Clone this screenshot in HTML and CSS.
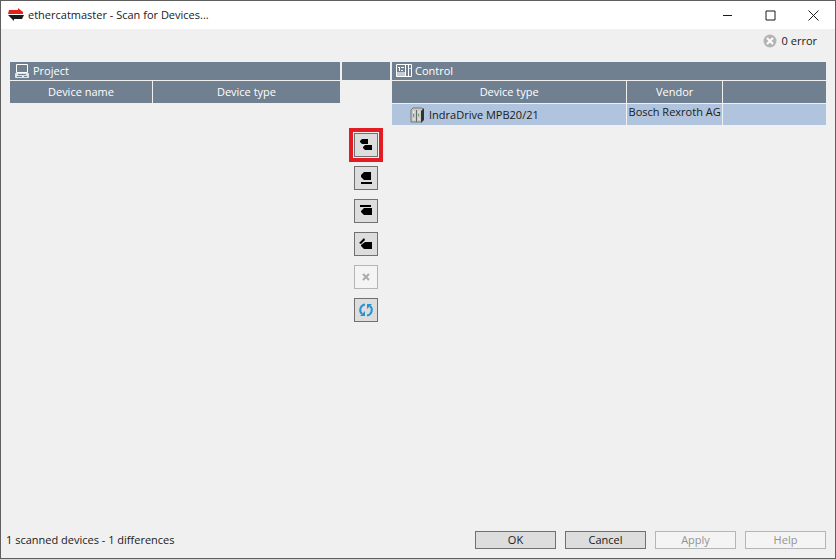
FILE: index.html
```html
<!DOCTYPE html>
<html lang="en">
<head>
    <meta charset="UTF-8">
    <meta name="viewport" content="width=device-width, initial-scale=1.0">
    <title>ethercatmaster - Scan for Devices...</title>
    <link rel="stylesheet" href="styles.css">
</head>
<body>

    <div class="window">
        <header class="titlebar">
            <svg class="app-icon" width="16" height="14" viewBox="0 0 16 14">
                <path d="M1 2h9V0l5 4v2H0z" fill="#e2231a"/>
                <path d="M16 7H0l6 6v-2h8z" fill="#1a1a1a"/>
            </svg>
            <h1>ethercatmaster - Scan for Devices...</h1>
            <div class="window-buttons">
                <button aria-label="Minimize"><svg width="11" height="11" viewBox="0 0 11 11"><path d="M1 5.5h9"/></svg></button>
                <button aria-label="Maximize"><svg width="11" height="11" viewBox="0 0 11 11"><path d="M1 1h9v9H1z"/></svg></button>
                <button aria-label="Close"><svg width="11" height="11" viewBox="0 0 11 11"><path d="M.5.5l10 10M10.500.5l-10 10"/></svg></button>
            </div>
        </header>

        <div class="errors">
            <svg width="14" height="14" viewBox="0 0 14 14">
                <circle cx="7" cy="7" r="6.500" fill="#b4b4b4"/>
                <path d="M4 4l6 6M10 4l-6 6" stroke="#fff" stroke-width="2"/>
            </svg>
            <span>0 error</span>
        </div>

        <main class="compare">
            <section class="panel">
                <h2>
                    <svg width="16" height="16" viewBox="0 0 16 16" fill="none" stroke="#fff">
                        <path d="M2.500 1.500h11v8h-11z"/>
                        <path d="M1.500 10.500h13v4h-13z" fill="#dfe4e8" stroke="#dfe4e8"/>
                        <path d="M4 11.500h8M3 13.500h5M10 13.500h3" stroke="#708090"/>
                    </svg>
                    Project
                </h2>
                <table>
                    <colgroup><col class="col-name"><col></colgroup>
                    <thead>
                        <tr><th>Device name</th><th>Device type</th></tr>
                    </thead>
                </table>
            </section>

            <div class="actions">
                <div class="actions-head"></div>
                <button class="marked" aria-label="Copy device">
                    <svg width="16" height="16" viewBox="0 0 16 16"><path d="M4 2h6v5H4L2 5V4zM7 8h7v5H7l-2-2v-1z"/></svg>
                </button>
                <button aria-label="Insert above">
                    <svg width="16" height="16" viewBox="0 0 16 16"><path d="M6 2h7v8H6L3 7V5zM3 12h11v2H3z"/></svg>
                </button>
                <button aria-label="Insert below">
                    <svg width="16" height="16" viewBox="0 0 16 16"><path d="M2 2h11v2H2zM6 5h8v7H6L3 9V8z"/></svg>
                </button>
                <button aria-label="Insert as child">
                    <svg width="16" height="16" viewBox="0 0 16 16"><path d="M1 7l5-5 1 2-4 4zM7 6h7v7H6l-3-3V9z"/></svg>
                </button>
                <button disabled aria-label="Delete">
                    <svg width="16" height="16" viewBox="0 0 16 16"><path d="M5 5l6 6M11 5l-6 6" stroke="#aaa" stroke-width="2"/></svg>
                </button>
                <button aria-label="Refresh">
                    <svg width="16" height="16" viewBox="0 0 16 16">
                        <path d="M7 2.500a5.500 5.500 0 0 0-3 9.500M9 13.500a5.500 5.500 0 0 0 3-9.500" fill="none" stroke="#2a93cf" stroke-width="2"/>
                        <path d="M2 14h5V9zM14 2H9v5z" fill="#2a93cf"/>
                    </svg>
                </button>
            </div>

            <section class="panel">
                <h2>
                    <svg width="16" height="14" viewBox="0 0 16 14" fill="none" stroke="#fff">
                        <path d="M.5.5h15v12H.5zM9.500 1v12M12.500 1v12M2 3.500h2M5 3.500h3M3.500 4v3M5 6.500h2"/>
                        <path d="M1 10h8" stroke="#c5ccd3" stroke-width="4"/>
                        <path d="M13 4.500h2" stroke="#c5ccd3"/>
                    </svg>
                    Control
                </h2>
                <table>
                    <colgroup><col><col class="col-vendor"><col class="col-extra"></colgroup>
                    <thead>
                        <tr><th>Device type</th><th>Vendor</th><th></th></tr>
                    </thead>
                    <tbody>
                        <tr>
                            <td>
                                <div class="device">
                                    <svg width="14" height="16" viewBox="0 0 14 16">
                                        <path d="M1 3l2-2h9l1 1v11l-2 2H1z" fill="#c9ccc6" stroke="#777"/>
                                        <path d="M11 4l3-3v12l-3 3z" fill="#333"/>
                                        <path d="M6.500 3v12" stroke="#6b6b6b"/>
                                        <path d="M3 5h2M8 5h2M3 12h2M8 12h2" stroke="#f3f3f3"/>
                                        <path d="M3 7h1v3H3zM8 7h1v2H8z" fill="#4fae4f"/>
                                    </svg>
                                    IndraDrive MPB20/21
                                </div>
                            </td>
                            <td class="vendor">Bosch Rexroth AG</td>
                            <td></td>
                        </tr>
                    </tbody>
                </table>
            </section>
        </main>

        <footer class="footer">
            <span class="status">1 scanned devices - 1 differences</span>
            <button>OK</button>
            <button>Cancel</button>
            <button disabled>Apply</button>
            <button disabled>Help</button>
        </footer>
    </div>

</body>
</html>
```
FILE: styles.css
```css
* { box-sizing: border-box; }
body { margin: 0; font-family: "Open Sans", "Noto Sans", sans-serif; font-size: 11px; line-height: 16px; color: #1a1a1a; }
h1, h2 { margin: 0; font-size: 11px; font-weight: normal; }
button { padding: 0; font: inherit; color: inherit; background: #ddd; border: 1px solid #707070; }
button:disabled { color: #939393; background: #f4f4f4; border-color: #b5b5b5; }
svg { display: block; flex: none; }

.window { display: flex; flex-direction: column; min-height: 100vh; background: #f0f0f0; border: 1px solid #5f5f5f; }

.titlebar { display: flex; align-items: center; height: 28px; padding-left: 7px; background: white; }
.titlebar h1 { flex: 1; margin-left: 4px; }
.window-buttons { display: flex; }
.window-buttons button { display: flex; align-items: center; justify-content: center; width: 43px; height: 28px; background: none; border: none; }
.window-buttons path { fill: none; stroke: #1a1a1a; }

.errors { display: flex; align-items: center; justify-content: flex-end; gap: 5px; height: 24px; padding-right: 18px; }

.compare { flex: 1; display: grid; grid-template-columns: 330fr 48px 434fr; gap: 2px; padding: 9px 9px 0; }
.panel h2 { display: flex; align-items: center; gap: 3px; height: 18px; padding-left: 4px; color: white; background: #708090; }
table { width: 100%; margin-top: 1px; table-layout: fixed; border-collapse: separate; border-spacing: 0; }
th, td { padding: 0; font-weight: normal; }
th { height: 22px; color: white; background: #708090; }
td { height: 22px; background: #b0c4de; border-top: 1px solid #f0f0f0; }
th + th, td + td { border-left: 1px solid #f0f0f0; }
.col-name { width: 43%; }
.col-vendor { width: 22%; }
.col-extra { width: 24%; }
.device { display: flex; align-items: center; gap: 5px; padding-left: 18px; }
.vendor { text-align: center; vertical-align: top; white-space: nowrap; }

.actions { display: flex; flex-direction: column; align-items: center; gap: 9px; }
.actions-head { width: 100%; height: 18px; margin-bottom: 44px; background: #708090; }
.actions button { display: flex; align-items: center; justify-content: center; width: 24px; height: 24px; }
.actions .marked { outline: 4px solid #e31b23; outline-offset: 1px; }

.footer { display: flex; align-items: center; gap: 9px; padding: 0 9px 9px 5px; }
.status { flex: 1; }
.footer button { width: 81px; height: 18px; line-height: 16px; }
```
